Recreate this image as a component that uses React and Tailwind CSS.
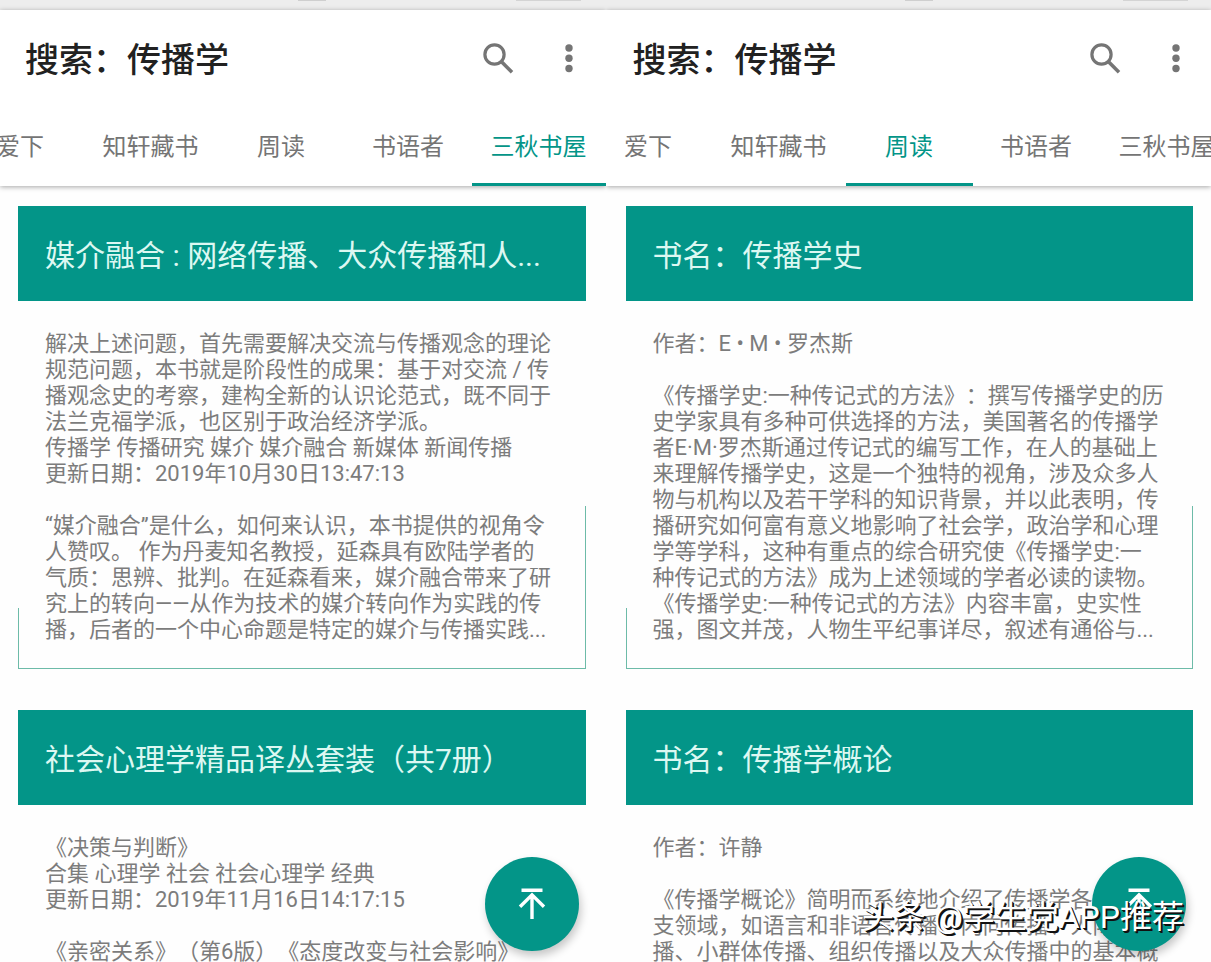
const TABS = ["爱下", "知轩藏书", "周读", "书语者", "三秋书屋"];

const LEFT_BOOKS = [
  {
    title: "媒介融合 : 网络传播、大众传播和人...",
    lines: [
      "解决上述问题，首先需要解决交流与传播观念的理论",
      "规范问题，本书就是阶段性的成果：基于对交流 / 传",
      "播观念史的考察，建构全新的认识论范式，既不同于",
      "法兰克福学派，也区别于政治经济学派。",
      "传播学 传播研究 媒介 媒介融合 新媒体 新闻传播",
      "更新日期：2019年10月30日13:47:13",
      "",
      "“媒介融合”是什么，如何来认识，本书提供的视角令",
      "人赞叹。 作为丹麦知名教授，延森具有欧陆学者的",
      "气质：思辨、批判。在延森看来，媒介融合带来了研",
      "究上的转向——从作为技术的媒介转向作为实践的传",
      "播，后者的一个中心命题是特定的媒介与传播实践...",
    ],
  },
  {
    title: "社会心理学精品译丛套装（共7册）",
    continues: true,
    lines: [
      "《决策与判断》",
      "合集 心理学 社会 社会心理学 经典",
      "更新日期：2019年11月16日14:17:15",
      "",
      "《亲密关系》（第6版）《态度改变与社会影响》",
    ],
  },
];

const RIGHT_BOOKS = [
  {
    title: "书名：传播学史",
    lines: [
      "作者：E • M • 罗杰斯",
      "",
      "《传播学史:一种传记式的方法》：撰写传播学史的历",
      "史学家具有多种可供选择的方法，美国著名的传播学",
      "者E·M·罗杰斯通过传记式的编写工作，在人的基础上",
      "来理解传播学史，这是一个独特的视角，涉及众多人",
      "物与机构以及若干学科的知识背景，并以此表明，传",
      "播研究如何富有意义地影响了社会学，政治学和心理",
      "学等学科，这种有重点的综合研究使《传播学史:一",
      "种传记式的方法》成为上述领域的学者必读的读物。",
      "《传播学史:一种传记式的方法》内容丰富，史实性",
      "强，图文并茂，人物生平纪事详尽，叙述有通俗与...",
    ],
  },
  {
    title: "书名：传播学概论",
    continues: true,
    lines: [
      "作者：许静",
      "",
      "《传播学概论》简明而系统地介绍了传播学各分",
      "支领域，如语言和非语言传播、内向传播、人际传",
      "播、小群体传播、组织传播以及大众传播中的基本概",
    ],
  },
];

function BookCard({ title, lines, continues }) {
  return (
    <article className="relative shrink-0">
      <h2 className="flex h-[95px] items-center bg-[#039588] px-[27px] pt-1 text-[30px] leading-none whitespace-nowrap text-[#dcf8f2]">
        {title}
      </h2>
      <div className="px-[27px] pt-[30px] pb-[26px] text-[22px] leading-[26px] whitespace-nowrap text-[#7c7c7c]">
        {lines.map((line, i) => (
          <p key={i} className="min-h-[26px]">
            {line}
          </p>
        ))}
      </div>
      {!continues && (
        <>
          <span className="absolute inset-x-0 bottom-0 h-px bg-[#6dbba8]" />
          <span className="absolute bottom-0 left-0 h-[61px] w-px bg-[#6dbba8]" />
          <span className="absolute right-0 bottom-0 h-[163px] w-px bg-[#6dbba8]" />
        </>
      )}
    </article>
  );
}

function Phone({ active, books, barPad, headerPad, listPad, tabsAlign }) {
  return (
    <section className="relative flex min-w-0 flex-col overflow-hidden bg-[#fefefe]">
      <div className={`flex h-[10px] shrink-0 justify-end gap-[190px] bg-[#ededed] ${barPad}`}>
        <span className="h-px w-[28px] bg-[#cfcfcf]" />
        <span className="h-px w-[65px] bg-[#d4d4d4]" />
      </div>
      <header className="relative z-10 shrink-0 bg-white shadow-[0_1px_5px_rgba(0,0,0,0.35)]">
        <div className={`flex h-[97px] items-center justify-between ${headerPad}`}>
          <h1 className="pt-0.5 text-[34px] font-medium leading-none text-[#212121]">搜索：传播学</h1>
          <div className="flex items-center gap-[50px] text-[#757575]">
            <button type="button" aria-label="搜索">
              <svg viewBox="0 0 32 32" className="size-8" fill="none" stroke="currentColor">
                <circle cx="11.5" cy="11.5" r="9.6" strokeWidth="3.2" />
                <path d="M18.3 18.5L29 29.2" strokeWidth="3.6" />
              </svg>
            </button>
            <button type="button" aria-label="更多">
              <svg viewBox="0 0 8 32" className="h-8 w-2" fill="currentColor">
                <circle cx="4" cy="5" r="3.7" />
                <circle cx="4" cy="15.3" r="3.7" />
                <circle cx="4" cy="25.5" r="3.7" />
              </svg>
            </button>
          </div>
        </div>
        <nav className={`flex overflow-hidden ${tabsAlign}`}>
          <div className="flex shrink-0">
            {TABS.map((tab) => (
              <button
                key={tab}
                type="button"
                className={`h-[79px] min-w-[127px] border-b-[3px] px-[19px] pt-1 text-[24px] leading-none whitespace-nowrap ${
                  tab === active ? "border-[#039588] text-[#039588]" : "border-transparent text-[#757575]"
                }`}
              >
                {tab}
              </button>
            ))}
          </div>
        </nav>
      </header>
      <div className={`flex min-h-0 flex-1 flex-col gap-[41px] overflow-hidden pt-5 ${listPad}`}>
        {books.map((book) => (
          <BookCard key={book.title} {...book} />
        ))}
      </div>
    </section>
  );
}

function ToTop({ place }) {
  return (
    <button
      type="button"
      aria-label="回到顶部"
      className={`absolute bottom-[11px] flex size-[94px] items-center justify-center rounded-full bg-[#039588] shadow-[2px_5px_9px_rgba(0,0,0,0.22)] ${place}`}
    >
      <svg viewBox="0 0 30 34" className="h-[34px] w-[30px]" fill="none" stroke="white" strokeWidth="3.4">
        <path d="M4.5 3.2H25.5M15 32V8M3 19.8L15 7.8L27 19.8" />
      </svg>
    </button>
  );
}

export default function App() {
  return (
    <main className="relative grid h-screen grid-cols-2 overflow-hidden bg-white font-['Roboto','Noto_Sans_CJK_SC',sans-serif] [text-spacing-trim:space-all]">
      <div className="relative grid min-h-0 min-w-0">
        <Phone
          active="三秋书屋"
          books={LEFT_BOOKS}
          barPad="pr-[25px]"
          headerPad="pl-[25px] pr-[33px]"
          listPad="pl-[18px] pr-5"
          tabsAlign="justify-end"
        />
        <ToTop place="right-[27px]" />
      </div>
      <div className="relative grid min-h-0 min-w-0">
        <Phone
          active="周读"
          books={RIGHT_BOOKS}
          barPad="pr-[23px]"
          headerPad="pl-[27px] pr-[31px]"
          listPad="pl-5 pr-[18px]"
          tabsAlign="justify-start [&>div]:-ml-[21px]"
        />
        <ToTop place="right-[25px]" />
      </div>
      <p className="absolute right-[27px] bottom-[25px] text-[32px] leading-[40px] whitespace-nowrap text-white [text-shadow:1px_1px_0_#111,2px_2px_0_#111]">
        头条 @学生党APP推荐
      </p>
    </main>
  );
}
